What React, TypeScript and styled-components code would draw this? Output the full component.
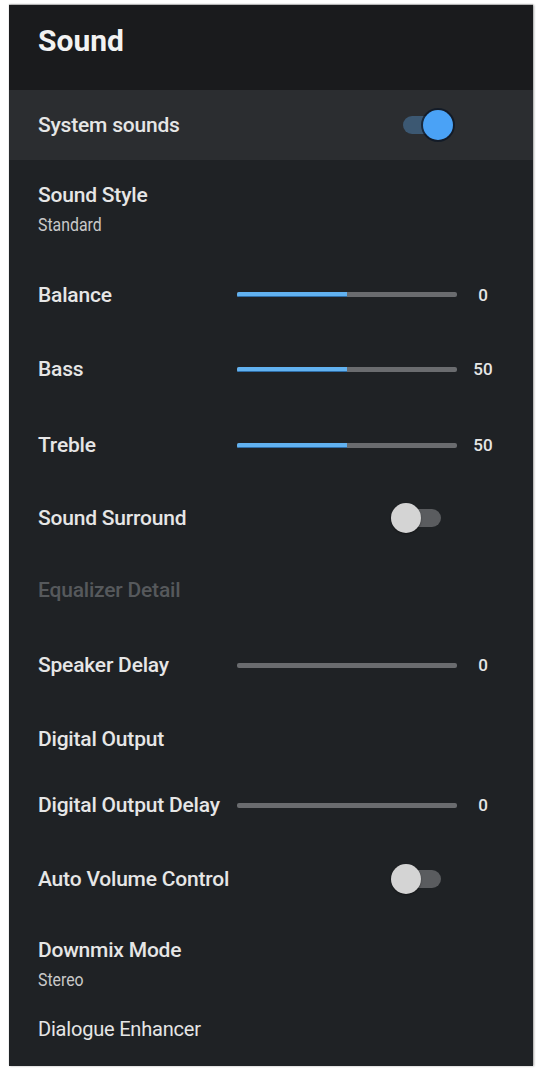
import React from "react";
import styled, { createGlobalStyle } from "styled-components";

const GlobalStyle = createGlobalStyle`
  html, body {
    margin: 0;
    padding: 0;
    background: #ffffff;
  }
  body {
    font-family: Roboto, "Liberation Sans", sans-serif;
  }
`;

type Item =
  | { kind: "toggle"; label: string; height: number; on: boolean; focus?: boolean }
  | { kind: "slider"; label: string; height: number; value: number; fill: number }
  | { kind: "text"; label: string; height: number; sub?: string; dim?: boolean; thin?: boolean };

const items: Item[] = [
  { kind: "toggle", label: "System sounds", height: 70, on: true, focus: true },
  { kind: "text", label: "Sound Style", sub: "Standard", height: 98 },
  { kind: "slider", label: "Balance", height: 73, value: 0, fill: 50 },
  { kind: "slider", label: "Bass", height: 76, value: 50, fill: 50 },
  { kind: "slider", label: "Treble", height: 76, value: 50, fill: 50 },
  { kind: "toggle", label: "Sound Surround", height: 70, on: false },
  { kind: "text", label: "Equalizer Detail", height: 74, dim: true },
  { kind: "slider", label: "Speaker Delay", height: 76, value: 0, fill: 0 },
  { kind: "text", label: "Digital Output", height: 72 },
  { kind: "slider", label: "Digital Output Delay", height: 60, value: 0, fill: 0 },
  { kind: "toggle", label: "Auto Volume Control", height: 88, on: false },
  { kind: "text", label: "Downmix Mode", sub: "Stereo", height: 82 },
  { kind: "text", label: "Dialogue Enhancer", height: 48, thin: true },
];

const App = () => {
  return (
    <>
      <GlobalStyle />
      <Page>
        <Panel>
          <Header>
            <Title>Sound</Title>
          </Header>
          {items.map((item) => {
            if (item.kind === "toggle") {
              return (
                <Row key={item.label} $height={item.height} $focus={item.focus}>
                  <Label>{item.label}</Label>
                  <Toggle $on={item.on}>
                    <Track $on={item.on} />
                    <Knob $on={item.on} />
                  </Toggle>
                </Row>
              );
            }
            if (item.kind === "slider") {
              return (
                <SliderRow key={item.label} $height={item.height}>
                  <Label>{item.label}</Label>
                  <Bar>
                    <Fill style={{ width: `${item.fill}%` }} />
                  </Bar>
                  <Value>{item.value}</Value>
                </SliderRow>
              );
            }
            return (
              <Row key={item.label} $height={item.height}>
                <TextStack>
                  <Label $dim={item.dim} $thin={item.thin}>
                    {item.label}
                  </Label>
                  {item.sub && <Sub>{item.sub}</Sub>}
                </TextStack>
              </Row>
            );
          })}
          <Footer />
        </Panel>
      </Page>
    </>
  );
};

export default App;

const Page = styled.div`
  width: 540px;
  height: 1070px;
  padding: 5px 0 0 9px;
  box-sizing: border-box;
`;

const Panel = styled.div`
  width: 524px;
  height: 1061px;
  background: #1f2225;
  display: flex;
  flex-direction: column;
  box-shadow: 1px 0 2px rgba(0, 0, 0, 0.35), 0 -1px 1px rgba(0, 0, 0, 0.2);
  overflow: hidden;
`;

const Header = styled.div`
  height: 85px;
  flex-shrink: 0;
  background: #1a1b1d;
  padding: 18px 0 0 29px;
  box-sizing: border-box;
`;

const Title = styled.h1`
  margin: 0;
  font-size: 30px;
  line-height: 36px;
  font-weight: 700;
  color: #f2f2f2;
`;

const Row = styled.div<{ $height: number; $focus?: boolean }>`
  height: ${(p) => p.$height}px;
  flex-shrink: 0;
  display: flex;
  align-items: center;
  padding-left: 29px;
  box-sizing: border-box;
  background: ${(p) => (p.$focus ? "#2b2d30" : "transparent")};
`;

const SliderRow = styled.div<{ $height: number }>`
  height: ${(p) => p.$height}px;
  flex-shrink: 0;
  display: grid;
  grid-template-columns: 188px 220px 30px;
  column-gap: 11px;
  align-items: center;
  padding-left: 29px;
  box-sizing: border-box;
`;

const TextStack = styled.div`
  display: flex;
  flex-direction: column;
  gap: 8px;
`;

const Label = styled.div<{ $dim?: boolean; $thin?: boolean }>`
  font-size: ${(p) => (p.$thin ? 20 : 21)}px;
  line-height: 24px;
  font-weight: ${(p) => (p.$thin ? 400 : 500)};
  color: ${(p) => (p.$dim ? "#56595c" : "#e6e6e6")};
  white-space: nowrap;
  letter-spacing: -0.2px;
`;

const Sub = styled.div`
  font-size: 18px;
  line-height: 20px;
  font-weight: 400;
  color: #c9c9c9;
  transform: scaleX(0.88);
  transform-origin: left center;
`;

const Bar = styled.div`
  height: 5px;
  border-radius: 2px;
  background: #6a6c6f;
  overflow: hidden;
`;

const Fill = styled.div`
  height: 100%;
  background: #62b2f0;
  box-shadow: inset 0 -1px 0 #2f6ea8;
`;

const Value = styled.div`
  font-size: 17px;
  line-height: 20px;
  font-weight: 500;
  color: #e6e6e6;
  text-align: center;
`;

const Toggle = styled.div<{ $on: boolean }>`
  position: relative;
  width: 50px;
  height: 30px;
  margin-left: auto;
  margin-right: ${(p) => (p.$on ? 80 : 92)}px;
`;

const Track = styled.div<{ $on: boolean }>`
  position: absolute;
  top: 6px;
  left: ${(p) => (p.$on ? 0 : 6)}px;
  width: 44px;
  height: 18px;
  border-radius: 9px;
  background: ${(p) => (p.$on ? "#3c5872" : "#5a5c5f")};
`;

const Knob = styled.div<{ $on: boolean }>`
  position: absolute;
  top: 0;
  left: ${(p) => (p.$on ? 20 : 0)}px;
  width: 30px;
  height: 30px;
  border-radius: 50%;
  background: ${(p) => (p.$on ? "#4aa2f6" : "#d4d4d4")};
  box-shadow: ${(p) =>
    p.$on ? "0 0 0 2px rgba(10, 20, 35, 0.7)" : "0 1px 2px rgba(0, 0, 0, 0.4)"};
`;

const Footer = styled.div`
  flex: 1;
`;
